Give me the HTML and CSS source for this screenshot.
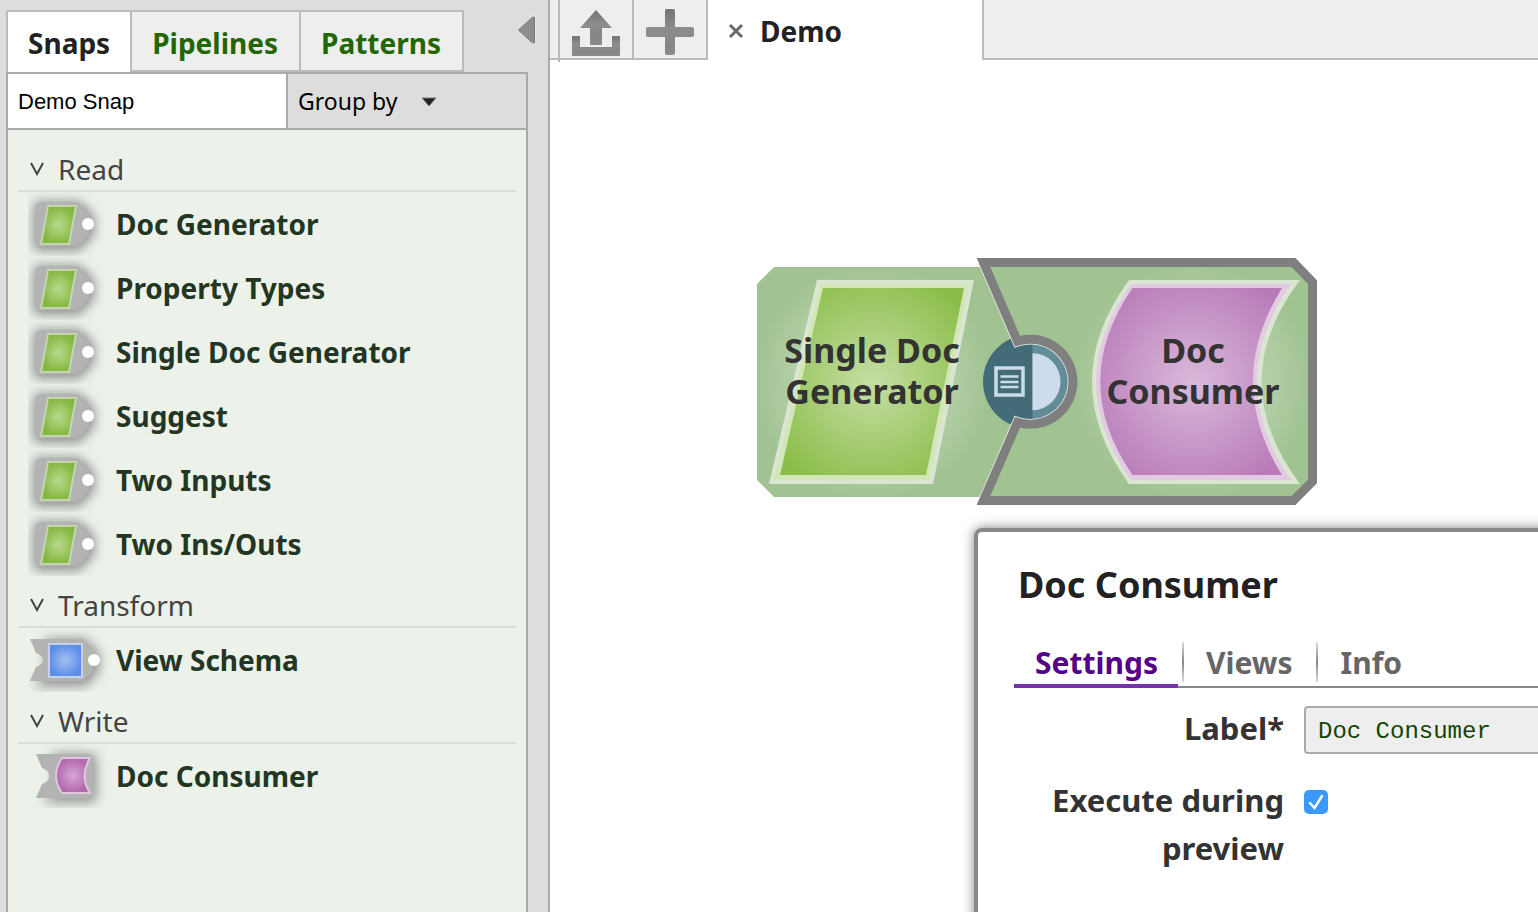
FILE: index.html
```html
<!DOCTYPE html>
<html lang="en">
<head>
<meta charset="utf-8">
<title>Demo</title>
<link rel="stylesheet" href="styles.css">
</head>
<body>
<svg class="defs" width="0" height="0" aria-hidden="true">
  <defs>
    <radialGradient id="lime"><stop offset="0" stop-color="#b9d98f"/><stop offset="1" stop-color="#84b840"/></radialGradient>
    <radialGradient id="blue"><stop offset="0" stop-color="#a5c0f2"/><stop offset="1" stop-color="#5c8dea"/></radialGradient>
    <radialGradient id="pink"><stop offset="0" stop-color="#d5a6d3"/><stop offset="1" stop-color="#b368b0"/></radialGradient>
    <filter id="soft" x="-40%" y="-40%" width="180%" height="180%"><feGaussianBlur stdDeviation="6"/></filter>
    <symbol id="snap-read" viewBox="0 0 84 64">
      <path d="M6 10h46l14 14v18l-14 16H6z" fill="#666" opacity=".75" filter="url(#soft)"/>
      <path d="M13 10h34q4 0 6 3l8 10v20l-8 8q-2 3-6 3H13q-5 0-5-5V15q0-5 5-5z" fill="#b3b3b3"/>
      <path d="M20 14h28l-7 38H13z" fill="url(#lime)" stroke="#c6d4b2" stroke-width="2"/>
      <circle cx="60" cy="32" r="6" fill="#fff"/>
    </symbol>
    <symbol id="snap-transform" viewBox="0 0 84 64">
      <path d="M16 11h42l13 14v18l-13 15H6l12-14V24z" fill="#666" opacity=".7" filter="url(#soft)"/>
      <path d="M2 11h53l10 10v22l-10 10H2l6-14q7-2 7-7t-7-7z" fill="#b3b3b3"/>
      <path d="M21 16h33v33H21z" fill="url(#blue)" stroke="#c6d2ea" stroke-width="2"/>
      <circle cx="66" cy="32" r="6" fill="#fff"/>
    </symbol>
    <symbol id="snap-write" viewBox="0 0 84 64">
      <path d="M22 10h46v48H14l14-14V24z" fill="#666" opacity=".7" filter="url(#soft)"/>
      <path d="M8 10h53l4 4v36l-4 4H8l6-14q7-2 7-8t-7-8z" fill="#b3b3b3"/>
      <path d="M34 14h28q-11 18 0 35H34q-12-17 0-35z" fill="url(#pink)" stroke="#dfc6dd" stroke-width="2"/>
    </symbol>
  </defs>
</svg>

<div class="app">
  <aside class="sidebar">
    <div class="sidebar-top">
      <nav class="side-tabs">
        <button class="side-tab active" type="button">Snaps</button>
        <button class="side-tab" type="button">Pipelines</button>
        <button class="side-tab" type="button">Patterns</button>
      </nav>
      <button class="collapse" type="button" aria-label="Collapse panel">
        <svg width="22" height="32" viewBox="0 0 22 32"><path d="M1 16 15 3q4-3 4 1v24q0 4-4 1z" fill="#8d8d8d" stroke="#f2f2f2" stroke-width="1"/><path d="M18.500 3v26" stroke="#777"/></svg>
      </button>
    </div>
    <section class="panel">
      <div class="filter">
        <input class="search" type="text" value="Demo Snap" aria-label="Search snaps">
        <div class="group-by">
          <select class="group-select" aria-label="Group by"><option>Group by</option></select>
          <svg class="caret" width="16" height="10" viewBox="0 0 16 10"><path d="M1 1h14L8 9z" fill="#222" stroke="#777"/></svg>
        </div>
      </div>
      <div class="groups">
        <button class="group-head" type="button"><svg width="14" height="14" viewBox="0 0 14 14"><path d="M1 1 7 12 13 1" fill="none" stroke="#444" stroke-width="2"/></svg>Read</button>
        <ul class="snaps">
          <li class="snap"><svg class="snap-icon"><use href="#snap-read"/></svg>Doc Generator</li>
          <li class="snap"><svg class="snap-icon"><use href="#snap-read"/></svg>Property Types</li>
          <li class="snap"><svg class="snap-icon"><use href="#snap-read"/></svg>Single Doc Generator</li>
          <li class="snap"><svg class="snap-icon"><use href="#snap-read"/></svg>Suggest</li>
          <li class="snap"><svg class="snap-icon"><use href="#snap-read"/></svg>Two Inputs</li>
          <li class="snap"><svg class="snap-icon"><use href="#snap-read"/></svg>Two Ins/Outs</li>
        </ul>
        <button class="group-head" type="button"><svg width="14" height="14" viewBox="0 0 14 14"><path d="M1 1 7 12 13 1" fill="none" stroke="#444" stroke-width="2"/></svg>Transform</button>
        <ul class="snaps">
          <li class="snap"><svg class="snap-icon"><use href="#snap-transform"/></svg>View Schema</li>
        </ul>
        <button class="group-head" type="button"><svg width="14" height="14" viewBox="0 0 14 14"><path d="M1 1 7 12 13 1" fill="none" stroke="#444" stroke-width="2"/></svg>Write</button>
        <ul class="snaps">
          <li class="snap"><svg class="snap-icon"><use href="#snap-write"/></svg>Doc Consumer</li>
        </ul>
      </div>
    </section>
  </aside>

  <main class="main">
    <header class="topbar">
      <span class="gutter"></span>
      <button class="tool" type="button" aria-label="Import pipeline">
        <svg width="48" height="48" viewBox="0 0 48 48"><defs><linearGradient id="steel" x2="0" y2="1"><stop offset="0" stop-color="#737373"/><stop offset=".4" stop-color="#8d8d8d"/><stop offset=".8" stop-color="#868686"/><stop offset="1" stop-color="#8d8d8d"/></linearGradient></defs><path d="M24 1 40 19H30v16q0 1-1 1H19q-1 0-1-1V19H8z" fill="url(#steel)"/><path d="M0 27h8v11h32V27h8v20H0z" fill="url(#steel)"/></svg>
      </button>
      <button class="tool" type="button" aria-label="New pipeline">
        <svg width="48" height="48" viewBox="0 0 48 48"><path d="M21 0h6q2 0 2 2v16h17q2 0 2 2v6q0 2-2 2H29v16q0 2-2 2h-6q-2 0-2-2V28H2q-2 0-2-2v-6q0-2 2-2h17V2q0-2 2-2z" fill="url(#steel)"/></svg>
      </button>
      <div class="doc-tab">
        <button class="close" type="button" aria-label="Close tab"><svg width="16" height="16" viewBox="0 0 16 16"><path d="m2 2 12 12M14 2 2 14" stroke="#666a70" stroke-width="3"/></svg></button>
        <span>Demo</span>
      </div>
      <span class="rest"></span>
    </header>

    <div class="canvas">
      <svg class="pipeline" width="580" height="262" viewBox="750 250 580 262" aria-hidden="true">
        <defs>
          <radialGradient id="body1" gradientUnits="userSpaceOnUse" cx="872" cy="382" r="118"><stop offset="0" stop-color="#d0e2c8"/><stop offset=".65" stop-color="#b3cea7"/><stop offset="1" stop-color="#a1c392"/></radialGradient>
          <radialGradient id="body2" gradientUnits="userSpaceOnUse" cx="1193" cy="382" r="118"><stop offset="0" stop-color="#d0e2c8"/><stop offset=".65" stop-color="#b3cea7"/><stop offset="1" stop-color="#a1c392"/></radialGradient>
          <radialGradient id="face1" gradientUnits="userSpaceOnUse" cx="872" cy="382" r="118"><stop offset="0" stop-color="#c5dea4"/><stop offset="1" stop-color="#8abd48"/></radialGradient>
          <radialGradient id="face2" gradientUnits="userSpaceOnUse" cx="1193" cy="382" r="118"><stop offset="0" stop-color="#dab9da"/><stop offset="1" stop-color="#b87ab8"/></radialGradient>
        </defs>
        <path d="M774 267H988L1030 350V414L988 497H774L757 480V284z" fill="url(#body1)"/>
        <path d="M817 280H974L933 484H769z" fill="#dae6d2"/>
        <path d="M820 284H969L929.500 480H774z" fill="#d3e6b8"/>
        <path d="M823 288H964L926 475H780z" fill="url(#face1)"/>
        <circle cx="1030" cy="381.700" r="47" fill="#436c78"/>
        <path d="M1032.500 334.700a47 47 0 0 1 0 94z" fill="#628c97"/>
        <path d="M1032.500 353.200a28 28.500 0 0 1 0 57z" fill="#ccdcec"/>
        <path d="M996 368h27v27h-27z" fill="none" stroke="#ccdcec" stroke-width="3.500"/>
        <path d="M1000.500 376.500h18M1000.500 382h18M1000.500 387h18" fill="none" stroke="#ccdcec" stroke-width="2.500"/>
        <path d="M983.500 262.500 1017.500 341.200A42.500 42.500 0 1 1 1017.500 422.200L983.500 500.500" fill="none" stroke="#eef2ee" stroke-width="10.500"/>
        <path d="M983.500 262.500H1293.500L1312.500 282V481.500L1293.500 500.500H983.500L1017.500 422.200A42.500 42.500 0 1 0 1017.500 341.200z" fill="url(#body2)" stroke="#7f7f7f" stroke-width="9"/>
        <path d="M1129 280H1300Q1223 381.700 1300 484H1129Q1055 381.700 1129 280z" fill="#dae6d2"/>
        <path d="M1131 284H1291Q1223 381.700 1291 480H1131Q1061 381.700 1131 284z" fill="#e3cae3"/>
        <path d="M1132.500 288H1282Q1224 381.700 1282 475H1132.500Q1068 381.700 1132.500 288z" fill="url(#face2)"/>
      </svg>
      <div class="node-label source">Single Doc Generator</div>
      <div class="node-label sink">Doc Consumer</div>

      <section class="dialog">
        <h2 class="dialog-title">Doc Consumer</h2>
        <nav class="dialog-tabs">
          <button class="dialog-tab active" type="button">Settings</button>
          <button class="dialog-tab" type="button">Views</button>
          <button class="dialog-tab" type="button">Info</button>
        </nav>
        <div class="field">
          <label class="field-label" for="label">Label*</label>
          <input class="text-input" id="label" type="text" value="Doc Consumer">
        </div>
        <div class="field">
          <label class="field-label" for="preview">Execute during preview</label>
          <div class="check">
            <input class="check-input" id="preview" type="checkbox" checked>
            <svg class="check-mark" width="24" height="24" viewBox="0 0 24 24"><path d="m6 13 4.500 5L18 6" fill="none" stroke="#fff" stroke-width="2.500" stroke-linecap="round"/></svg>
          </div>
        </div>
      </section>
    </div>
  </main>
</div>
</body>
</html>
```
FILE: styles.css
```css
* { box-sizing: border-box; }

body {
  margin: 0;
  background: #fff;
  color: #222;
  font-family: "Noto Sans", "Open Sans", sans-serif;
  font-size: 28px;
}

button, input, select {
  margin: 0;
  padding: 0;
  border: 0;
  background: none;
  color: inherit;
  font: inherit;
}

.defs { position: absolute; }

.app { display: flex; height: 100vh; overflow: hidden; }

.sidebar {
  display: flex;
  flex-direction: column;
  flex: 0 0 550px;
  padding: 10px 20px 0 6px;
  background: #ddd;
  border-right: 2px solid #aaa;
}

.sidebar-top { display: flex; justify-content: space-between; margin-right: -10px; }
.side-tabs { display: flex; height: 62px; }

.side-tab {
  padding: 4px 21px 0 20px;
  border: 2px solid #bbb;
  background: #eee;
  color: #260;
  font-weight: 700;
}
.side-tab + .side-tab { margin-left: -2px; }
.side-tab.active { padding: 2px 20px 0; background: #fff; color: #222; border-bottom: 0; }

.collapse { align-self: flex-start; padding-top: 4px; line-height: 0; }

.panel {
  display: flex;
  flex-direction: column;
  flex: 1;
  border: 2px solid #aaa;
  border-bottom: 0;
  background: #ecf1ea;
}

.filter { display: flex; height: 56px; border-bottom: 2px solid #aaa; }

.search {
  flex: 0 0 278px;
  min-width: 0;
  padding: 2px 10px 0;
  background: #fff;
  color: #000;
  font-family: "Liberation Sans", Arial, sans-serif;
  font-size: 22px;
}

.group-by { position: relative; flex: 1; border-left: 2px solid #aaa; background: #ddd; }
.group-select { appearance: none; width: 100%; height: 100%; padding-left: 10px; color: #000; font-size: 23px; }
.caret { position: absolute; left: 133px; top: 23px; pointer-events: none; }

.groups { padding: 10px; }

.group-head {
  display: flex;
  align-items: center;
  gap: 14px;
  width: 100%;
  height: 52px;
  padding: 8px 12px 0;
  border-bottom: 2px solid #dadcd9;
  color: #444;
}

.snaps { margin: 0; padding: 0; list-style: none; }
.snap {
  display: flex;
  align-items: center;
  gap: 4px;
  height: 64px;
  padding-left: 10px;
  color: #233523;
  font-weight: 700;
}
.snap-icon { width: 84px; height: 64px; }

.main { display: flex; flex-direction: column; flex: 1; min-width: 0; }

.topbar { display: flex; height: 60px; }
.gutter { width: 10px; height: 62px; border-right: 2px solid #bbb; background: linear-gradient(#eee 58px, #bbb 58px 60px, #fff 60px); }
.tool {
  width: 74px;
  padding: 8px 0 0;
  border-right: 2px solid #bbb;
  border-bottom: 2px solid #bbb;
  background: #eee;
  line-height: 0;
}
.doc-tab {
  display: flex;
  align-items: center;
  gap: 16px;
  width: 274px;
  padding: 2px 20px 0;
  font-weight: 700;
}
.close { line-height: 0; }
.rest { flex: 1; border-left: 2px solid #bbb; border-bottom: 2px solid #bbb; border-bottom-left-radius: 2px; background: #eee; }

.canvas { position: relative; flex: 1; overflow: hidden; }

.pipeline { position: absolute; left: 200px; top: 190px; }
.node-label {
  position: absolute;
  top: 270px;
  width: 200px;
  color: #333;
  font-size: 34px;
  font-weight: 700;
  line-height: 41px;
  text-align: center;
}
.node-label.source { left: 222px; }
.node-label.sink { left: 543px; }

.dialog {
  position: absolute;
  left: 424px;
  top: 468px;
  right: -20px;
  bottom: -20px;
  padding: 28px 0 0 36px;
  border: 4px solid #888;
  border-radius: 8px;
  background: #fff;
  box-shadow: 0 0 12px rgba(0, 0, 0, .5);
}
.dialog-title { margin: 0; padding-left: 4px; font-size: 36px; line-height: 50px; }

.dialog-tabs { display: flex; margin-top: 30px; height: 48px; border-bottom: 2px solid #888; }
.dialog-tab {
  position: relative;
  height: 48px;
  padding: 0 24px 4px 22px;
  color: #666;
  font-size: 30px;
  font-weight: 700;
}
.dialog-tab:last-child { padding-left: 24px; }
.dialog-tab.active {
  margin-right: 6px;
  padding: 0 20px 0 21px;
  border-bottom: 4px solid #7633a8;
  color: #508;
}
.dialog-tab::after {
  content: "";
  position: absolute;
  right: -1px;
  top: 2px;
  width: 2px;
  height: 40px;
  background: linear-gradient(#ddd, #888 50%, #ddd);
}
.dialog-tab.active::after { right: -6px; }
.dialog-tab:last-child::after { display: none; }

.field { display: flex; align-items: flex-start; gap: 20px; margin-top: 18px; }
.field + .field { margin-top: 22px; }
.field-label {
  flex: 0 0 270px;
  color: #333;
  font-size: 31px;
  font-weight: 700;
  line-height: 48px;
  text-align: right;
}
.field:nth-of-type(1) .field-label { line-height: 44px; }
.text-input {
  flex: 1;
  height: 48px;
  padding: 2px 12px 0;
  border: 2px solid #aaa;
  border-radius: 4px;
  background: #eee;
  color: #140;
  font-family: "Liberation Mono", "Courier New", monospace;
  font-size: 24px;
}
.check { position: relative; width: 24px; height: 24px; margin-top: 14px; }
.check-input { display: block; appearance: none; width: 24px; height: 24px; border-radius: 5px; background: #3b99fc; }
.check-mark { position: absolute; left: 0; top: 0; pointer-events: none; }
```
